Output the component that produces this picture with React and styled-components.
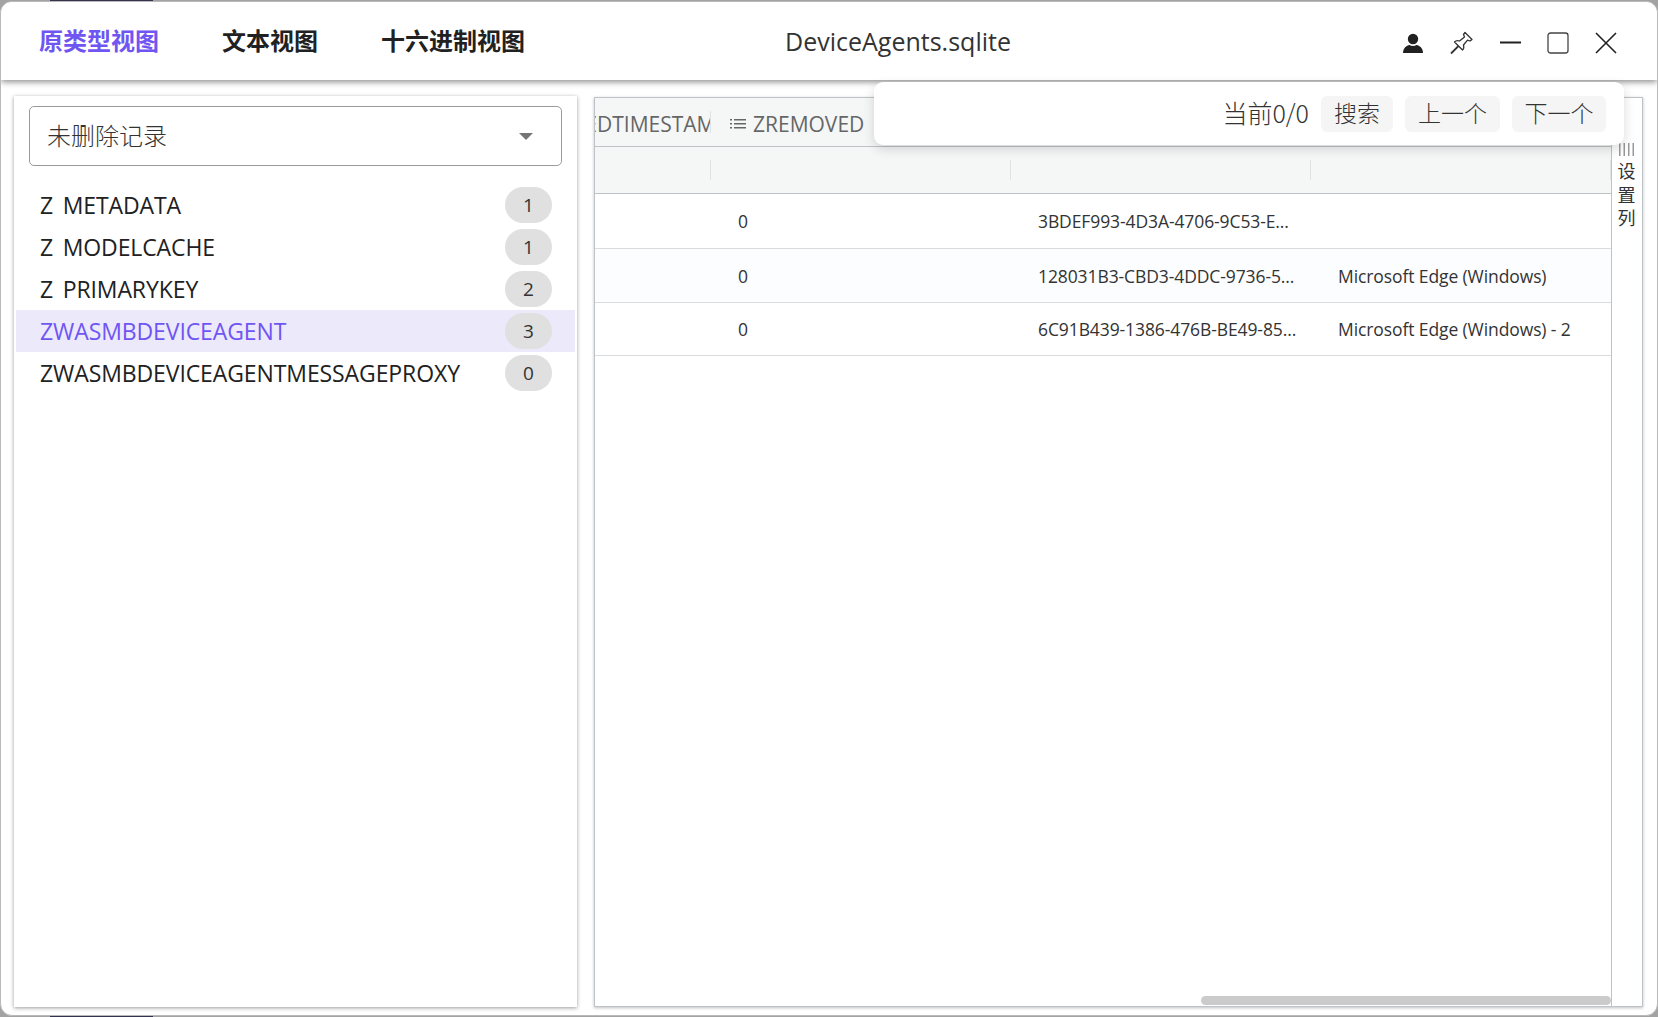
import React from "react";
import styled, { createGlobalStyle } from "styled-components";

const Global = createGlobalStyle`
  html, body {
    margin: 0;
    padding: 0;
    background: #a3a3a3;
    overflow: hidden;
  }
  * { box-sizing: border-box; }
`;

const FONT = `"Open Sans", "Noto Sans CJK SC", sans-serif`;
const CJK = `"Noto Sans CJK SC", sans-serif`;

const Desktop = styled.div`
  position: relative;
  width: 1658px;
  height: 1017px;
  padding-top: 1px;
`;

// bit of the desktop that peeks out above and below the window
const Peek = styled.i`
  position: absolute;
  left: 50px;
  width: 103px;
  height: 1px;
  background: #33334f;
  ${(p) => (p.$bottom ? "bottom: 0;" : "top: 0;")}
`;

const Win = styled.div`
  position: relative;
  width: 1658px;
  height: 1015px;
  display: flex;
  flex-direction: column;
  background: #fff;
  border: 1px solid #b9b9b9;
  border-radius: 12px;
  overflow: hidden;
  font-family: ${FONT};
  color: #212121;
`;

const Header = styled.header`
  position: relative;
  z-index: 2;
  flex: none;
  height: 78px;
  display: flex;
  align-items: center;
  padding: 0 0 0 38px;
  background: #fff;
  box-shadow: 0 2px 6px rgba(0, 0, 0, 0.45);
`;

const Tabs = styled.nav`
  display: flex;
  gap: 63px;
  width: 729px;
  margin-bottom: 3px;
`;

const Tab = styled.span`
  font-size: 24px;
  font-weight: 700;
  font-family: ${CJK};
  color: ${(p) => (p.$active ? "#6f55f2" : "#212121")};
`;

const Title = styled.div`
  width: 260px;
  text-align: center;
  font-size: 25px;
  margin-bottom: 1px;
  color: #333;
`;

const Tools = styled.div`
  margin-left: auto;
  margin-right: 40px;
  margin-top: 3px;
  display: flex;
  align-items: center;
  gap: 26px;
  svg { display: block; }
`;

const Body = styled.main`
  flex: 1;
  min-height: 0;
  display: flex;
  padding: 16px 14px 8px 13px;
  gap: 17px;
`;

const Side = styled.aside`
  flex: none;
  width: 563px;
  background: #fff;
  padding: 10px 2px 0;
  box-shadow: 0 1px 4px rgba(0, 0, 0, 0.4);
`;

const Select = styled.div`
  height: 60px;
  margin: 0 13px 18px 13px;
  display: flex;
  align-items: center;
  justify-content: space-between;
  padding: 0 28px 3px 17px;
  border: 1px solid #9b9b9b;
  border-radius: 5px;
  font-size: 24px;
  font-family: ${CJK};
  font-weight: 300;
  color: #333;
`;

const Caret = styled.i`
  width: 0;
  height: 0;
  margin-top: 3px;
  border-left: 7px solid transparent;
  border-right: 7px solid transparent;
  border-top: 7px solid #757575;
`;

const Row = styled.div`
  height: 42px;
  display: flex;
  align-items: center;
  justify-content: space-between;
  padding: 0 23px 0 24px;
  font-size: 23px;
  letter-spacing: -0.1px;
  background: ${(p) => (p.$active ? "#ece9fb" : "transparent")};
  color: ${(p) => (p.$active ? "#6f55f2" : "#212121")};
`;

const Badge = styled.span`
  width: 47px;
  height: 36px;
  border-radius: 18px;
  background: #e0e0e0;
  color: #333;
  font-size: 19px;
  display: flex;
  align-items: center;
  justify-content: center;
`;

const Grid = styled.section`
  flex: 1;
  min-width: 0;
  margin-top: 1px;
  display: flex;
  border: 1px solid #bdc3c7;
  box-shadow: 0 1px 3px rgba(0, 0, 0, 0.25);
  height: 910px;
`;

const Table = styled.div`
  position: relative;
  flex: 1;
  min-width: 0;
  border-right: 1px solid #bdc3c7;
`;

const HeadRow = styled.div`
  display: grid;
  grid-template-columns: 116px 300px 300px 1fr;
  height: ${(p) => p.$h}px;
  background: #f5f7f7;
  border-bottom: 1px solid #bdc3c7;
  align-items: center;
`;

const HeadCell = styled.div`
  position: relative;
  height: 100%;
  display: flex;
  align-items: center;
  overflow: hidden;
  padding: 4px 0 0 ${(p) => (p.$clip ? 0 : 19)}px;
  font-size: 21px;
  color: #666;
  white-space: nowrap;
  svg { margin-right: 7px; flex: none; }
  &::after {
    content: "";
    position: absolute;
    right: 0;
    top: 13px;
    bottom: 13px;
    width: 1px;
    background: #dfe3e4;
  }
`;

const Clipped = styled.span`
  margin-left: -142px;
`;

const DataRow = styled.div`
  display: grid;
  grid-template-columns: 116px 300px 300px 1fr;
  height: ${(p) => p.$h}px;
  background: ${(p) => (p.$odd ? "#fcfdfe" : "#fff")};
  border-bottom: 1px solid #d9dcde;
  align-items: center;
`;

const Cell = styled.div`
  padding-left: 27px;
  font-size: 17.5px;
  letter-spacing: -0.1px;
  color: #333;
  white-space: nowrap;
`;

const ScrollThumb = styled.div`
  position: absolute;
  left: 606px;
  right: 0;
  bottom: 1px;
  height: 9px;
  border-radius: 5px;
  background: #cbcbcb;
`;

const SideBar = styled.div`
  flex: none;
  width: 30px;
  display: flex;
  flex-direction: column;
  align-items: center;
  padding-top: 45px;
  padding-right: 1px;
  background: #fff;
  font-family: ${CJK};
  font-weight: 400;
  font-size: 18px;
  line-height: 23.5px;
  color: #333;
  svg { display: block; margin-bottom: 3px; }
`;

const Popover = styled.div`
  position: absolute;
  z-index: 3;
  left: 873px;
  top: 80px;
  width: 750px;
  height: 63px;
  display: flex;
  align-items: center;
  justify-content: flex-end;
  gap: 12px;
  padding-right: 18px;
  background: #fff;
  border-radius: 9px;
  box-shadow: 0 4px 12px rgba(0, 0, 0, 0.15);
  font-family: ${CJK};
  font-weight: 300;
  color: #333;
`;

const Counter = styled.span`
  font-size: 25px;
  margin-bottom: 4px;
`;

const PopBtn = styled.span`
  width: ${(p) => p.$w}px;
  height: 36px;
  display: flex;
  align-items: center;
  justify-content: center;
  padding-bottom: 3px;
  font-size: 23px;
  background: #f5f5f5;
  border-radius: 6px;
`;

const tables = [
  ["Z_METADATA", 1],
  ["Z_MODELCACHE", 1],
  ["Z_PRIMARYKEY", 2],
  ["ZWASMBDEVICEAGENT", 3, true],
  ["ZWASMBDEVICEAGENTMESSAGEPROXY", 0],
];

const rows = [
  { h: 55, id: "3BDEF993-4D3A-4706-9C53-E...", name: "" },
  { h: 54, id: "128031B3-CBD3-4DDC-9736-5...", name: "Microsoft Edge (Windows)", odd: true },
  { h: 53, id: "6C91B439-1386-476B-BE49-85...", name: "Microsoft Edge (Windows) - 2" },
];

const UserIcon = () => (
  <svg width="20" height="20" viewBox="0 0 20 20" fill="#212121">
    <circle cx="10" cy="6" r="5.2" />
    <path d="M0 20c0-5 3.5-7.5 6.5-8 2 1.3 5 1.3 7 0 3 .5 6.5 3 6.5 8z" />
  </svg>
);

const PinIcon = () => (
  <svg width="25" height="24" viewBox="0 0 24 24" fill="none" stroke="#333" strokeWidth="1.3" strokeLinejoin="round">
    <path d="M15.5 1.5L22.5 8.5L20.5 10L18 9.2L14 14C14.5 16 14.5 18 13 19L5 11C6.5 9.5 8.5 9.5 10 10L15 6L14 3.5Z" />
    <path d="M9 15L1.5 22.5" strokeWidth="1.8" />
  </svg>
);

const MinIcon = () => (
  <svg width="21" height="21" viewBox="0 0 21 21">
    <rect x="0" y="9.5" width="21" height="2" fill="#212121" />
  </svg>
);

const MaxIcon = () => (
  <svg width="22" height="22" viewBox="0 0 22 22" fill="none" stroke="#444" strokeWidth="1.3">
    <rect x="1" y="1" width="20" height="20" rx="2.5" />
  </svg>
);

const CloseIcon = () => (
  <svg width="22" height="22" viewBox="0 0 22 22" stroke="#212121" strokeWidth="1.6">
    <path d="M1 1l20 20M21 1L1 21" />
  </svg>
);

const ColIcon = () => (
  <svg width="16" height="12" viewBox="0 0 16 12" fill="#666">
    <rect x="0" y="1" width="2" height="1.5" />
    <rect x="4" y="1" width="12" height="1.5" />
    <rect x="0" y="5" width="2" height="1.5" />
    <rect x="4" y="5" width="12" height="1.5" />
    <rect x="0" y="9" width="2" height="1.5" />
    <rect x="4" y="9" width="12" height="1.5" />
  </svg>
);

const ColumnsIcon = () => (
  <svg width="16" height="13" viewBox="0 0 16 13" fill="#999">
    <rect x="0" y="0" width="1.5" height="13" />
    <rect x="4.5" y="0" width="1.5" height="13" />
    <rect x="9" y="0" width="1.5" height="13" />
    <rect x="13.5" y="0" width="1.5" height="13" />
  </svg>
);

export default function App() {
  return (
    <Desktop>
      <Global />
      <Peek />
      <Peek $bottom />
      <Win>
        <Header>
          <Tabs>
            <Tab $active>原类型视图</Tab>
            <Tab>文本视图</Tab>
            <Tab>十六进制视图</Tab>
          </Tabs>
          <Title>DeviceAgents.sqlite</Title>
          <Tools>
            <UserIcon />
            <PinIcon />
            <MinIcon />
            <MaxIcon />
            <CloseIcon />
          </Tools>
        </Header>
        <Body>
          <Side>
            <Select>
              未删除记录
              <Caret />
            </Select>
            {tables.map(([name, count, active]) => (
              <Row key={name} $active={active}>
                <span>{name.replace("_", "\u00a0\u2006")}</span>
                <Badge>{count}</Badge>
              </Row>
            ))}
          </Side>
          <Grid>
            <Table>
              <HeadRow $h={49}>
                <HeadCell $clip>
                  <Clipped>ZLASTMODIFIEDTIMESTAMP</Clipped>
                </HeadCell>
                <HeadCell>
                  <ColIcon />
                  ZREMOVED
                </HeadCell>
                <HeadCell />
                <HeadCell />
              </HeadRow>
              <HeadRow $h={47}>
                <HeadCell $clip />
                <HeadCell />
                <HeadCell />
                <HeadCell />
              </HeadRow>
              {rows.map((r) => (
                <DataRow key={r.id} $h={r.h} $odd={r.odd}>
                  <Cell />
                  <Cell>0</Cell>
                  <Cell>{r.id}</Cell>
                  <Cell>{r.name}</Cell>
                </DataRow>
              ))}
              <ScrollThumb />
            </Table>
            <SideBar>
              <ColumnsIcon />
              <span>设</span>
              <span>置</span>
              <span>列</span>
            </SideBar>
          </Grid>
        </Body>
        <Popover>
          <Counter>当前0/0</Counter>
          <PopBtn $w={72}>搜索</PopBtn>
          <PopBtn $w={95}>上一个</PopBtn>
          <PopBtn $w={94}>下一个</PopBtn>
        </Popover>
      </Win>
    </Desktop>
  );
}
